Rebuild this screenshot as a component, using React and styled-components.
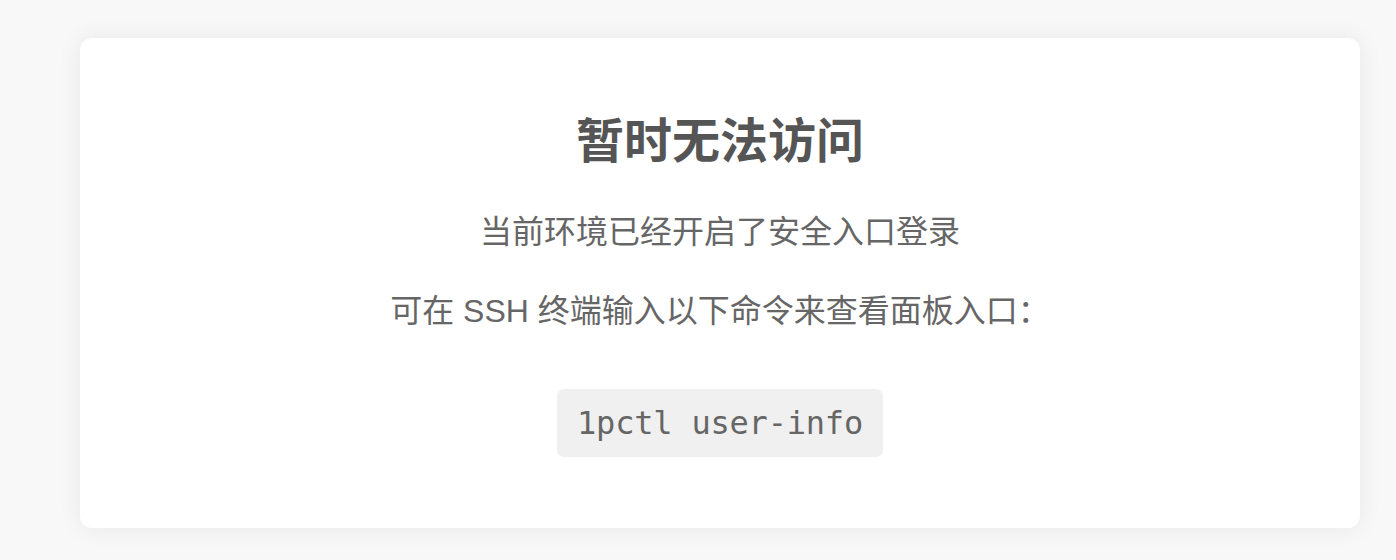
import React from "react";
import styled, { createGlobalStyle } from "styled-components";

const GlobalStyle = createGlobalStyle`
  html, body {
    margin: 0;
    padding: 0;
    background: #f8f8f8;
  }
  body {
    font-family: "Liberation Sans", "Noto Sans CJK SC", sans-serif;
  }
`;

const Page = styled.div`
  display: flex;
  justify-content: flex-start;
  padding: 38px 36px 32px 80px;
  min-height: 560px;
  box-sizing: border-box;
`;

const Card = styled.div`
  width: 1280px;
  height: 490px;
  box-sizing: border-box;
  background: #ffffff;
  border-radius: 12px;
  box-shadow: 0 0 24px rgba(0, 0, 0, 0.07);
  display: flex;
  flex-direction: column;
  align-items: center;
  padding-top: 76px;
`;

const Title = styled.h1`
  margin: 0;
  font-family: "Liberation Sans", "Noto Sans CJK SC", sans-serif;
  font-size: 48px;
  line-height: 56px;
  font-weight: 700;
  color: #555555;
`;

const Text = styled.p`
  margin: ${(p) => p.$top}px 0 0;
  font-size: 32px;
  line-height: 40px;
  color: #666666;
`;

const Code = styled.code`
  margin-top: 58px;
  display: block;
  padding: 14px 20px;
  background: #f0f0f0;
  border-radius: 7px;
  font-family: "DejaVu Sans Mono", "Liberation Mono", monospace;
  font-size: 32px;
  line-height: 40px;
  letter-spacing: -0.2px;
  color: #666666;
`;

export default function App() {
  return (
    <>
      <GlobalStyle />
      <Page>
        <Card>
          <Title>暂时无法访问</Title>
          <Text $top={42}>当前环境已经开启了安全入口登录</Text>
          <Text $top={39}>可在 SSH 终端输入以下命令来查看面板入口：</Text>
          <Code>1pctl user-info</Code>
        </Card>
      </Page>
    </>
  );
}
